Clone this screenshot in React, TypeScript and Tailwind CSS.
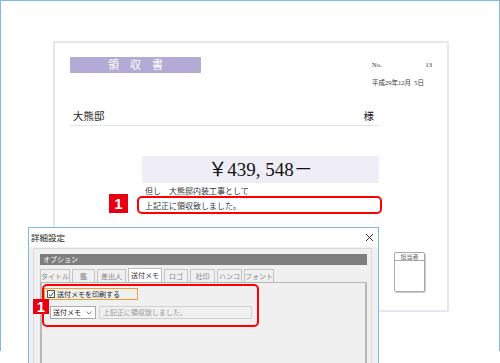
import React from "react";

const serif = { fontFamily: "'Liberation Serif', 'Noto Sans CJK JP', serif" };
const ui = { fontFamily: "'Noto Sans CJK JP', 'Liberation Sans', sans-serif" };

const tabs = [
  { label: "タイトル", w: "w-[30px]" },
  { label: "鑑", w: "w-[23px]" },
  { label: "差出人", w: "w-[29px]" },
  { label: "送付メモ", w: "w-[34px]", active: true },
  { label: "ロゴ", w: "w-[24px]" },
  { label: "社印", w: "w-[25px]" },
  { label: "ハンコ", w: "w-[25px]" },
  { label: "フォント", w: "w-[30px]" },
];

function Badge({ className }: { className: string }) {
  return (
    <div
      className={`absolute flex items-center justify-center bg-[#e60012] text-[15px] font-bold leading-none text-white ${className}`}
      style={{ fontFamily: "'Liberation Sans', sans-serif" }}
    >
      1
    </div>
  );
}

function Receipt() {
  return (
    <div
      className="relative ml-[52px] mt-[40px] flex h-[271px] w-[396px] flex-col rounded-[2px] border-2 border-[#e7e5f1] bg-white pl-[15px] pr-[15px] pt-[14px] text-[#222]"
      style={serif}
    >
      <div className="flex h-[40px] items-start">
        <div className="flex h-[16px] w-[131px] items-center justify-center rounded-[1px] bg-[#b3aad5] text-[11px] leading-none text-white">
          領　収　書
        </div>
        <div className="ml-auto w-[60px] pt-[3px] text-[6.5px] leading-[10px] text-[#333]">
          <div className="flex justify-between">
            <span>No.</span>
            <span>13</span>
          </div>
          <div className="mt-[8px] whitespace-nowrap">平成29年12月&nbsp;&nbsp;5日</div>
        </div>
      </div>

      <div className="mt-[12px] flex h-[17px] w-[309px] items-center justify-between border-b border-[#e3e1ee] pl-[3px] pr-[5px] text-[10.5px] leading-none">
        <span>大熊邸</span>
        <span>様</span>
      </div>

      <div className="ml-[72px] mt-[30px] flex h-[27px] w-[237px] items-center justify-center bg-[#efeef6] text-[19px] leading-none text-[#111]">
        ￥439, 548－
      </div>

      <div className="ml-[75px] mt-[1px] text-[8px] leading-[15px] text-[#333]">
        <div>但し　大熊邸内装工事として</div>
        <div>上記正に領収致しました。</div>
      </div>

      <div className="ml-[324px] mt-[38px] flex h-[40px] w-[31px] flex-col rounded-[2px] border border-[#aaa] shadow-[1px_1px_0_#ccc]" style={ui}>
        <div className="flex h-[8px] items-center justify-center border-b border-[#aaa] text-[6px] leading-none text-[#666]">
          担当者
        </div>
      </div>

      <div className="absolute left-[82px] top-[153px] h-[18px] w-[245px] rounded-[5px] border-2 border-[#ff0000]" />
      <Badge className="left-[54px] top-[151px] h-[19px] w-[19px]" />
    </div>
  );
}

function Dialog() {
  return (
    <div
      className="absolute left-[28px] top-[227px] flex h-[140px] w-[351px] flex-col border border-[#7db9e8] bg-white"
      style={ui}
    >
      <div className="flex h-[19px] items-center justify-between pl-[2px] pr-[4px]">
        <span className="text-[8.5px] leading-none text-[#222]">詳細設定</span>
        <svg width="9" height="9" viewBox="0 0 9 9">
          <path d="M1 1 L8 8 M8 1 L1 8" stroke="#333" strokeWidth="1" />
        </svg>
      </div>
      <div className="flex flex-1 flex-col bg-[#f0f0f0] pl-[4px] pr-[6px] pt-[1px]">
        <div className="flex flex-1 flex-col border border-b-0 border-[#d8d8d8] pl-[6px] pr-[4px] pt-[5px]">
          <div className="flex h-[11px] items-center bg-[#7e7e7e] pl-[3px] text-[7px] leading-none text-white">
            オプション
          </div>
          <div className="mt-[3px] flex h-[14px] items-end gap-[2px]">
            {tabs.map((t) => (
              <div
                key={t.label}
                className={`flex items-center justify-center border border-b-0 text-[7px] leading-none ${t.w} ${
                  t.active
                    ? "h-[14px] border-[#bbb] bg-white text-[#333]"
                    : "h-[13px] border-[#c4c4c4] bg-[#f0f0f0] text-[#888]"
                }`}
              >
                {t.label}
              </div>
            ))}
          </div>
          <div className="relative flex flex-1 flex-col border-l-2 border-r-2 border-t border-[#b8b8b8] bg-[#f0f0f0] pl-[2px] pt-[5px]">
            <div className="flex h-[12px] w-[94px] items-center gap-[2px] border border-[#f0a030] pl-[2px]">
              <div className="flex h-[8px] w-[8px] items-center justify-center border border-[#555] bg-white">
                <svg width="7" height="7" viewBox="0 0 7 7">
                  <path d="M1 3.5 L3 5.5 L6.5 1" stroke="#222" strokeWidth="1" fill="none" />
                </svg>
              </div>
              <span className="text-[7px] leading-none text-[#222]">送付メモを印刷する</span>
            </div>
            <div className="ml-[6px] mt-[6px] flex items-center gap-[3px]">
              <div className="flex h-[13px] w-[46px] items-center justify-between border border-[#aaa] bg-white pl-[2px] pr-[3px]">
                <span className="text-[7px] leading-none text-[#222]">送付メモ</span>
                <svg width="6" height="4" viewBox="0 0 6 4">
                  <path d="M0.5 0.5 L3 3 L5.5 0.5" stroke="#555" strokeWidth="0.8" fill="none" />
                </svg>
              </div>
              <div className="flex h-[13px] w-[153px] items-center border border-[#d0d0d0] bg-[#f0f0f0] pl-[3px] text-[7px] leading-none text-[#999]">
                上記正に領収致しました。
              </div>
            </div>
            <div className="absolute left-[0px] top-[1px] h-[43px] w-[217px] rounded-[5px] border-2 border-[#ff0000]" />
          </div>
        </div>
      </div>
      <Badge className="left-[4px] top-[71px] h-[15px] w-[16px] text-[13px]" />
    </div>
  );
}

export default function App() {
  return (
    <div className="relative h-[363px] w-[500px] overflow-hidden bg-white">
      <div className="h-[351px] w-[500px] border-l border-r border-t border-[#80bce9]">
        <div className="h-full border-b-2 border-dotted border-[#d4d4d4]">
          <Receipt />
        </div>
      </div>
      <Dialog />
    </div>
  );
}
